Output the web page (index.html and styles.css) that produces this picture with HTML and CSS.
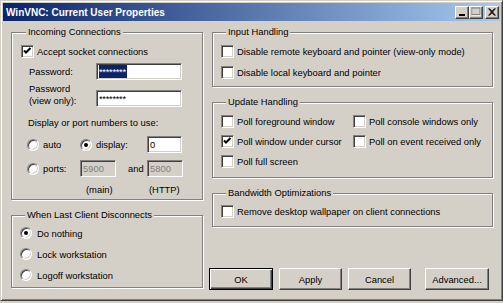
FILE: index.html
```html
<!DOCTYPE html>
<html lang="en">
<head>
    <meta charset="UTF-8">
    <title>WinVNC: Current User Properties</title>
    <link rel="stylesheet" href="styles.css">
</head>
<body>
    <div class="window">
        <div class="titlebar">
            <span class="title">WinVNC: Current User Properties</span>
            <div class="caption-buttons">
                <span class="cap-btn"><svg width="12" height="10" viewBox="0 0 12 10"><rect x="3" y="7" width="6" height="2" fill="#000"/></svg></span>
                <span class="cap-btn"><svg width="12" height="10" viewBox="0 0 12 10"><rect x="2.5" y="0.5" width="8" height="7.5" fill="none" stroke="#fff"/><rect x="2" y="0" width="8" height="7.5" fill="none" stroke="#808080"/><rect x="2" y="0.5" width="8" height="1" fill="#808080"/></svg></span>
                <span class="cap-btn close"><svg width="12" height="10" viewBox="0 0 12 10"><path d="M2.5 1.5 L8.5 8.5 M3.5 1.5 L9.5 8.5 M8.5 1.5 L2.5 8.5 M9.5 1.5 L3.5 8.5" stroke="#000" stroke-width="1"/></svg></span>
            </div>
        </div>

        <div class="client">
            <div class="col-left">
                <div class="group incoming">
                    <span class="legend">Incoming Connections</span>
                    <div class="check-row first-row">
                        <span class="check"><svg width="11" height="11" viewBox="0 0 11 11"><polyline points="2,4.5 4,6.5 8.5,2" fill="none" stroke="#000" stroke-width="2"/></svg></span>
                        <span>Accept socket connections</span>
                    </div>
                    <div class="field-row pw-row">
                        <span class="field-label">Password:</span>
                        <span class="edit pw"><span class="selected">********</span></span>
                    </div>
                    <div class="field-row pw-view-row">
                        <span class="field-label">Password<br>(view only):</span>
                        <span class="edit pw">********</span>
                    </div>
                    <div class="ports-caption">Display or port numbers to use:</div>
                    <div class="port-grid">
                        <span class="opt"><span class="radio"></span>auto</span>
                        <span class="opt"><span class="radio on"></span>display:</span>
                        <span class="edit small">0</span>
                        <span class="opt"><span class="radio"></span>ports:</span>
                        <span class="port-cell"><span class="edit small disabled">5900</span><span class="and">and</span></span>
                        <span class="edit small disabled">5800</span>
                        <span></span>
                        <span class="port-note main">(main)</span>
                        <span class="port-note http">(HTTP)</span>
                    </div>
                </div>

                <div class="group disconnect">
                    <span class="legend">When Last Client Disconnects</span>
                    <div class="radio-list">
                        <span class="opt wide"><span class="radio on"></span>Do nothing</span>
                        <span class="opt wide"><span class="radio"></span>Lock workstation</span>
                        <span class="opt wide"><span class="radio"></span>Logoff workstation</span>
                    </div>
                </div>
            </div>

            <div class="col-right">
                <div class="group input-group">
                    <span class="legend">Input Handling</span>
                    <div class="check-row first-row"><span class="check"></span><span>Disable remote keyboard and pointer (view-only mode)</span></div>
                    <div class="check-row second-row"><span class="check"></span><span>Disable local keyboard and pointer</span></div>
                </div>

                <div class="group update-group">
                    <span class="legend">Update Handling</span>
                    <div class="check-grid">
                        <div class="check-row"><span class="check"></span><span>Poll foreground window</span></div>
                        <div class="check-row"><span class="check"></span><span>Poll console windows only</span></div>
                        <div class="check-row"><span class="check"><svg width="11" height="11" viewBox="0 0 11 11"><polyline points="2,4.5 4,6.5 8.5,2" fill="none" stroke="#000" stroke-width="2"/></svg></span><span>Poll window under cursor</span></div>
                        <div class="check-row"><span class="check"></span><span>Poll on event received only</span></div>
                        <div class="check-row"><span class="check"></span><span>Poll full screen</span></div>
                    </div>
                </div>

                <div class="group bandwidth-group">
                    <span class="legend">Bandwidth Optimizations</span>
                    <div class="check-row bw-row"><span class="check"></span><span>Remove desktop wallpaper on client connections</span></div>
                </div>

                <div class="buttons">
                    <button class="btn default">OK</button>
                    <button class="btn">Apply</button>
                    <button class="btn">Cancel</button>
                    <button class="btn advanced">Advanced...</button>
                </div>
            </div>
        </div>
    </div>
</body>
</html>
```

FILE: styles.css
```css
body {
    margin: 0;
    background: #d4d0c8;
    font-family: "Liberation Sans", Arial, sans-serif;
    font-size: 9.4px;
    color: #000;
}
.window {
    width: 503px;
    height: 301px;
    box-sizing: border-box;
    padding: 2px;
    border: 1px solid;
    border-color: #d4d0c8 #404040 #404040 #d4d0c8;
    box-shadow: inset 1px 1px 0 #fff, inset -1px -1px 0 #808080;
    background: #d4d0c8;
    display: flex;
    flex-direction: column;
}
.titlebar {
    height: 18px;
    flex: none;
    display: flex;
    align-items: center;
    justify-content: space-between;
    padding: 0 1px 0 3px;
    background: linear-gradient(to right, #0a246a, #a6caf0);
}
.title {
    color: #fff;
    font-weight: bold;
    font-size: 10px;
}
.caption-buttons {
    display: flex;
}
.cap-btn {
    box-sizing: border-box;
    width: 14px;
    height: 13px;
    display: flex;
    align-items: center;
    justify-content: center;
    background: #d4d0c8;
    border: 1px solid;
    border-color: #fff #404040 #404040 #fff;
    box-shadow: inset -1px -1px 0 #808080;
}
.cap-btn.close {
    margin-left: 2px;
}
.client {
    display: flex;
    padding: 11px 0 0 8px;
}
.col-left {
    width: 192px;
    display: flex;
    flex-direction: column;
}
.col-right {
    width: 284px;
    margin-left: 6px;
    display: flex;
    flex-direction: column;
}
.group {
    box-sizing: border-box;
    border: 1px solid #808080;
    box-shadow: inset 1px 1px 0 #fff, 1px 1px 0 #fff;
    display: flex;
    flex-direction: column;
    align-items: flex-start;
}
.legend {
    margin: -7px 0 0 5px;
    padding: 0 2px;
    line-height: 12px;
    background: #d4d0c8;
}
.check-row {
    display: flex;
    align-items: center;
    gap: 3px;
    height: 13px;
}
.check {
    box-sizing: border-box;
    width: 13px;
    height: 13px;
    flex: none;
    background: #fff;
    border: 1px solid;
    border-color: #808080 #fff #fff #808080;
    box-shadow: inset 1px 1px 0 #404040, inset -1px -1px 0 #d4d0c8;
}
.check svg {
    display: block;
}
.radio {
    box-sizing: border-box;
    width: 12px;
    height: 12px;
    flex: none;
    border-radius: 50%;
    background: #fff;
    border: 1px solid;
    border-color: #808080 #fff #fff #808080;
    box-shadow: inset 1px 1px 0 #404040, inset -1px -1px 0 #d4d0c8;
    display: flex;
    align-items: center;
    justify-content: center;
}
.radio.on::after {
    content: "";
    width: 4px;
    height: 4px;
    border-radius: 50%;
    background: #000;
}
.opt {
    display: flex;
    align-items: center;
    gap: 4px;
}
.edit {
    box-sizing: border-box;
    height: 17px;
    display: flex;
    align-items: center;
    padding-left: 2px;
    background: #fff;
    border: 1px solid;
    border-color: #808080 #fff #fff #808080;
    box-shadow: inset 1px 1px 0 #404040, inset -1px -1px 0 #d4d0c8;
}
.edit.pw {
    width: 86px;
    letter-spacing: -0.3px;
}
.edit .selected {
    background: #0a246a;
    color: #fff;
    line-height: 13px;
    padding-right: 1px;
}
.edit.small {
    width: 35px;
}
.edit.disabled {
    width: 36px;
    background: #d4d0c8;
    color: #808080;
}

/* Incoming Connections */
.incoming {
    height: 168px;
    padding-left: 9px;
}
.first-row {
    margin-top: 7px;
}
.field-row {
    display: flex;
    align-items: flex-end;
    margin-left: 8px;
}
.field-label {
    width: 67px;
    line-height: 12px;
}
.pw-row {
    margin-top: 5px;
    align-items: center;
}
.pw-view-row {
    margin-top: 3px;
}
.ports-caption {
    margin: 10px 0 0 7px;
    line-height: 12px;
}
.port-grid {
    display: grid;
    grid-template-columns: 53px 67px 35px;
    grid-template-rows: 17px 17px 12px;
    row-gap: 7px;
    align-items: center;
    margin: 7px 0 0 6px;
}
.port-cell {
    display: flex;
    align-items: center;
}
.and {
    margin-left: 12px;
}
.port-note {
    line-height: 12px;
}
.port-note.main {
    padding-left: 6px;
}
.port-note.http {
    padding-left: 2px;
}

/* When Last Client Disconnects */
.disconnect {
    height: 73px;
    margin-top: 15px;
    padding-left: 8px;
}
.radio-list {
    display: flex;
    flex-direction: column;
    gap: 9px;
    margin-top: 6px;
}
.opt.wide {
    gap: 5px;
}

/* right column */
.col-right .group {
    margin-left: 3px;
    width: 281px;
    padding-left: 8px;
}
.input-group {
    height: 55px;
}
.second-row {
    margin-top: 8px;
}
.col-right .update-group {
    height: 76px;
    margin-top: 15px;
}
.check-grid {
    display: grid;
    grid-template-columns: 132px auto;
    row-gap: 7px;
    margin-top: 7px;
}
.col-right .bandwidth-group {
    height: 34px;
    margin-top: 15px;
}
.bw-row {
    margin-top: 6px;
}
.buttons {
    display: flex;
    margin-top: 41px;
}
.btn {
    box-sizing: border-box;
    width: 63px;
    height: 22px;
    margin-right: 6px;
    padding: 0;
    font-family: inherit;
    font-size: 9.4px;
    color: #000;
    background: #d4d0c8;
    border: 1px solid;
    border-color: #fff #404040 #404040 #fff;
    box-shadow: inset -1px -1px 0 #808080;
}
.btn.default {
    width: 64px;
    border-color: #000;
    box-shadow: inset 1px 1px 0 #fff, inset -1px -1px 0 #404040, inset -2px -2px 0 #808080;
}
.btn.advanced {
    width: 64px;
    margin-left: 8px;
    margin-right: 0;
}
```
